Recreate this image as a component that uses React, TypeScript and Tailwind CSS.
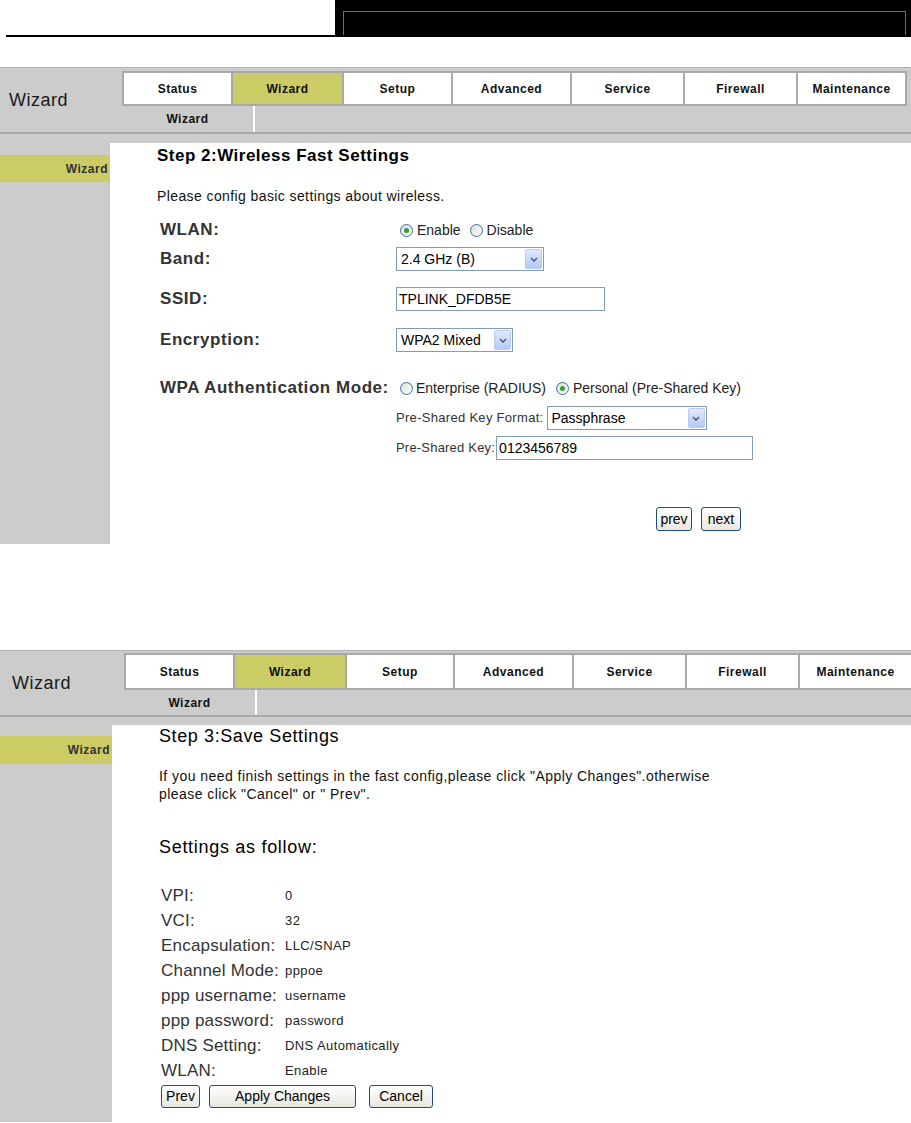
import React from 'react';

const TABS = ['Status', 'Wizard', 'Setup', 'Advanced', 'Service', 'Firewall', 'Maintenance'];
const TAB_W1 = ['w-[107px]', 'w-[109px]', 'w-[107px]', 'w-[117px]', 'w-[111px]', 'w-[111px]', 'flex-1'];
const TAB_W2 = ['w-[107px]', 'w-[110px]', 'w-[106px]', 'w-[117px]', 'w-[111px]', 'w-[111px]', 'flex-1'];

function NavBand({ v }: { v: 1 | 2 }) {
  const widths = v === 1 ? TAB_W1 : TAB_W2;
  return (
    <div className="border-t border-[#b2b2b2] bg-[#cccccc]">
      <div className="flex">
        <div className={v === 1 ? 'flex w-[122px] items-center pl-[9px]' : 'flex w-[124px] items-center pl-[12px]'}>
          <span className="text-[18px] tracking-[0.5px] text-[#1a1a1a]">Wizard</span>
        </div>
        <div className="flex flex-1 flex-col">
          <div
            className={
              v === 1
                ? 'mt-[3px] flex h-[35px] w-[785px] gap-[2px] bg-[#a9a9a9] p-[2px]'
                : 'mt-[2px] flex h-[37px] gap-[2px] bg-[#a9a9a9] p-[2px] pr-0'
            }
          >
            {TABS.map((t, i) => (
              <div
                key={t}
                className={`${widths[i]} flex items-center justify-center text-[12px] font-bold tracking-[0.5px] text-[#111] ${
                  t === 'Wizard' ? 'bg-[#cccc66]' : 'bg-white'
                }`}
              >
                {t}
              </div>
            ))}
          </div>
          <div className={v === 1 ? 'flex h-[26px]' : 'flex h-[25px]'}>
            <div className="flex w-[131px] items-center justify-center text-[12px] font-bold tracking-[0.5px] text-[#111]">
              Wizard
            </div>
            <div className="w-[2px] bg-white" />
          </div>
        </div>
      </div>
      <div className="h-[2px] bg-[#a9a9a9]" />
    </div>
  );
}

function Sidebar({ v }: { v: 1 | 2 }) {
  return (
    <div className={v === 1 ? 'w-[110px] pt-[12px]' : 'w-[112px] pt-[11px]'}>
      <div
        className={`flex items-center justify-end bg-[#cccc66] pr-[2px] text-[12px] font-bold tracking-[0.5px] text-[#333] ${
          v === 1 ? 'h-[27px]' : 'h-[28px]'
        }`}
      >
        Wizard
      </div>
    </div>
  );
}

function Radio({ checked, className = '' }: { checked?: boolean; className?: string }) {
  return (
    <span
      className={`flex h-[13px] w-[13px] shrink-0 items-center justify-center rounded-full border border-[#3f6e9c] bg-gradient-to-br from-[#dcdcd6] to-white ${className}`}
    >
      {checked && <span className="h-[5px] w-[5px] rounded-full bg-[#2aa52a]" />}
    </span>
  );
}

function Select({ value, className }: { value: string; className: string }) {
  return (
    <div className={`flex h-[24px] items-center border border-[#7f9db9] bg-white ${className}`}>
      <span className="flex-1 pl-[4px] text-[14px] text-black">{value}</span>
      <span className="mr-[1px] flex h-[20px] w-[17px] items-center justify-center rounded-[2px] border border-[#bccbef] bg-gradient-to-b from-[#e1e9fd] to-[#b4c8f4]">
        <svg width="8" height="5" viewBox="0 0 8 5">
          <path d="M1 1 L4 4 L7 1" fill="none" stroke="#4d6185" strokeWidth="1.6" />
        </svg>
      </span>
    </div>
  );
}

function TextBox({ value, className }: { value: string; className: string }) {
  return (
    <div className={`flex h-[24px] items-center border border-[#7f9db9] bg-white pl-[2px] text-[14px] text-black ${className}`}>
      {value}
    </div>
  );
}

function XpButton({ label, className }: { label: string; className: string }) {
  return (
    <div
      className={`flex items-center justify-center rounded-[3px] border border-[#1f4e7a] bg-gradient-to-b from-white to-[#e8e7e1] text-[14px] text-black ${className}`}
    >
      {label}
    </div>
  );
}

const labelCls = 'w-[236px] shrink-0 text-[17px] font-bold tracking-[0.55px] text-[#333]';

function StepTwo() {
  return (
    <div className="h-[401px] flex-1 bg-white pl-[47px] pt-[3px]">
      <h2 className="text-[17px] font-bold leading-[20px] tracking-[0.5px] text-black">Step 2:Wireless Fast Settings</h2>
      <p className="mt-[22px] text-[14px] leading-[16px] tracking-[0.4px] text-[#111]">
        Please config basic settings about wireless.
      </p>
      <div className="ml-[3px] mt-[15px]">
        <div className="flex h-[22px] items-center">
          <span className={labelCls}>WLAN:</span>
          <div className="flex items-center pl-[4px] text-[14px] text-[#222]">
            <Radio checked />
            <span className="ml-[4px]">Enable</span>
            <Radio className="ml-[9px]" />
            <span className="ml-[4px]">Disable</span>
          </div>
        </div>
        <div className="mt-[6px] flex h-[24px] items-center">
          <span className={labelCls}>Band:</span>
          <Select value="2.4 GHz (B)" className="w-[148px]" />
        </div>
        <div className="mt-[16px] flex h-[24px] items-center">
          <span className={labelCls}>SSID:</span>
          <TextBox value="TPLINK_DFDB5E" className="w-[209px]" />
        </div>
        <div className="mt-[17px] flex h-[24px] items-center">
          <span className={labelCls}>Encryption:</span>
          <Select value="WPA2 Mixed" className="w-[117px]" />
        </div>
        <div className="mt-[25px] flex h-[22px] items-center">
          <span className={`${labelCls} whitespace-nowrap`}>WPA Authentication Mode:</span>
          <div className="flex items-center whitespace-nowrap pl-[4px] text-[14px] text-[#222]">
            <Radio />
            <span className="ml-[3px]">Enterprise (RADIUS)</span>
            <Radio checked className="ml-[10px]" />
            <span className="ml-[4px]">Personal (Pre-Shared Key)</span>
          </div>
        </div>
        <div className="mt-[7px] flex h-[24px] items-center pl-[236px]">
          <span className="whitespace-nowrap text-[13px] tracking-[0.3px] text-[#333]">Pre-Shared Key Format:</span>
          <Select value="Passphrase" className="ml-[3px] w-[160px]" />
        </div>
        <div className="mt-[6px] flex h-[24px] items-center pl-[236px]">
          <span className="whitespace-nowrap text-[13px] tracking-[0.2px] text-[#333]">Pre-Shared Key:</span>
          <TextBox value="0123456789" className="ml-[1px] w-[257px]" />
        </div>
        <div className="mt-[47px] flex h-[24px] gap-[9px] pl-[496px]">
          <XpButton label="prev" className="w-[36px]" />
          <XpButton label="next" className="w-[40px]" />
        </div>
      </div>
    </div>
  );
}

const SETTINGS: [string, string][] = [
  ['VPI:', '0'],
  ['VCI:', '32'],
  ['Encapsulation:', 'LLC/SNAP'],
  ['Channel Mode:', 'pppoe'],
  ['ppp username:', 'username'],
  ['ppp password:', 'password'],
  ['DNS Setting:', 'DNS Automatically'],
  ['WLAN:', 'Enable'],
];

function StepThree() {
  return (
    <div className="h-[397px] flex-1 bg-white pl-[47px] pt-[1px]">
      <h2 className="text-[18px] leading-[20px] tracking-[0.6px] text-black">Step 3:Save Settings</h2>
      <p className="mt-[21px] whitespace-nowrap text-[14px] leading-[18px] tracking-[0.45px] text-[#111]">
        If you need finish settings in the fast config,please click "Apply Changes".otherwise
        <br />
        please click "Cancel" or " Prev".
      </p>
      <h3 className="mt-[34px] text-[18px] leading-[20px] tracking-[0.7px] text-black">Settings as follow:</h3>
      <div className="ml-[2px] mt-[26px]">
        {SETTINGS.map(([k, val]) => (
          <div key={k} className="flex h-[25px] items-center">
            <span className="w-[124px] shrink-0 whitespace-nowrap text-[17px] tracking-[0.2px] text-[#333]">{k}</span>
            <span className="text-[13px] tracking-[0.4px] text-[#222]">{val}</span>
          </div>
        ))}
        <div className="mt-[2px] flex h-[23px]">
          <XpButton label="Prev" className="w-[39px]" />
          <XpButton label="Apply Changes" className="ml-[9px] w-[147px]" />
          <XpButton label="Cancel" className="ml-[13px] w-[64px]" />
        </div>
      </div>
    </div>
  );
}

export default function App() {
  return (
    <div className="h-[1123px] w-[911px] overflow-hidden bg-white font-['Liberation_Sans',Arial,sans-serif]">
      {/* page header strip */}
      <div className="flex h-[37px]">
        <div className="flex w-[335px] items-end pl-[6px]">
          <div className="h-[2px] w-full bg-black" />
        </div>
        <div className="flex flex-1 bg-black pb-[2px] pl-[8px] pr-[5px] pt-[11px]">
          <div className="flex-1 border-x border-t border-[#6e6e6e]" />
        </div>
      </div>

      <div className="mt-[30px]">
        <NavBand v={1} />
        <div className="flex bg-[#cccccc] pt-[9px]">
          <Sidebar v={1} />
          <StepTwo />
        </div>
      </div>

      <div className="mt-[106px]">
        <NavBand v={2} />
        <div className="flex bg-[#cccccc] pt-[8px]">
          <Sidebar v={2} />
          <StepThree />
        </div>
      </div>
    </div>
  );
}
